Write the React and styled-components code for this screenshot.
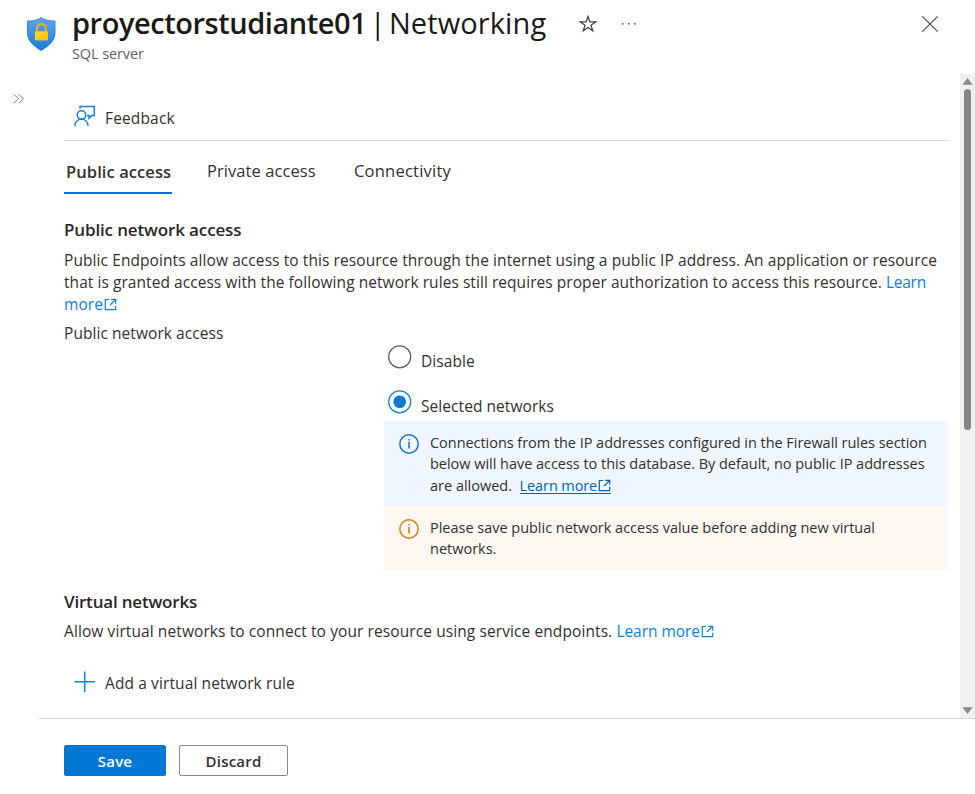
import React from 'react';
import styled, { createGlobalStyle } from 'styled-components';

const Global = createGlobalStyle`
  * { box-sizing: border-box; }
  body { margin: 0; background: #fff; font-family: "Open Sans", "Noto Sans", sans-serif; color: #323130; }
`;

const Blade = styled.div`
  width: 975px; height: 794px; display: flex; flex-direction: column; background: #fff; overflow: hidden;
`;
const Header = styled.header`
  height: 74px; flex: none; display: flex; align-items: flex-start; padding-left: 26px;
`;
const ShieldSlot = styled.div` width: 46px; padding-top: 16px; line-height: 0; `;
const Titles = styled.div` width: 503px; display: flex; flex-direction: column; `;
const Title = styled.h1`
  margin: 0; height: 44px; font-size: 29px; line-height: 46px; font-weight: 400; color: #1b1a19;
  display: flex; white-space: pre;
`;
const Run = styled.span`
  font-weight: ${p => p.$weight || 400};
  letter-spacing: ${p => p.$ls || 0}px;
  margin-right: ${p => p.$mr || 0}px;
`;
const Subtitle = styled.div`
  font-size: 14.5px; line-height: 20px; color: #605e5c; letter-spacing: -0.1px; white-space: nowrap;
`;
const HeaderIcon = styled.button`
  display: flex; border: 0; background: none; padding: 0; line-height: 0;
  margin: ${p => p.$margin};
`;
const Main = styled.div` height: 644px; flex: none; display: flex; `;
const Rail = styled.div` width: 64px; padding: 19px 0 0 13px; line-height: 0; `;
const Content = styled.main` width: 896px; display: flex; flex-direction: column; `;
const Command = styled.div`
  display: flex; align-items: center; gap: 9px; padding-left: 10px; height: ${p => p.$h}px;
  font-size: 15.5px; line-height: 22px; white-space: nowrap; margin-top: ${p => p.$mt || 0}px;
  svg { margin-bottom: ${p => p.$lift || 0}px; }
`;
const Toolbar = styled.div`
  width: 886px; height: 67px; padding-top: 21px; border-bottom: 1px solid #d9d8d7;
`;
const Tabs = styled.nav` display: flex; height: 53px; `;
const Tab = styled.a`
  height: 53px; width: ${p => p.$w}px; padding: ${p => (p.$active ? '18px 0 0 2px' : '17px 0 0 0')};
  margin-right: ${p => p.$gap || 0}px; font-size: 16.5px; line-height: 25px; white-space: nowrap;
  font-weight: ${p => (p.$active ? 600 : 400)}; letter-spacing: ${p => p.$ls || 0}px;
  border-bottom: ${p => (p.$active ? '2px solid #0f6cd6' : '0')};
`;
const Heading = styled.h2`
  margin: ${p => p.$mt}px 0 0; font-size: 17px; line-height: 26px; font-weight: 600; color: #292827;
  letter-spacing: ${p => p.$ls || 0}px; white-space: nowrap;
`;
const Line = styled.div`
  font-size: ${p => p.$size || 15.5}px; line-height: ${p => p.$lh || 22.3}px; white-space: pre;
  letter-spacing: ${p => p.$ls || 0}px; margin-top: ${p => p.$mt || 0}px;
`;
const Link = styled.a`
  color: ${p => (p.$dark ? '#0b62a8' : '#0f80d8')};
  border-bottom: ${p => (p.$dark ? '1px solid #0b62a8' : '0')};
  display: inline-block; line-height: ${p => (p.$dark ? '14px' : 'inherit')};
  letter-spacing: ${p => p.$ls || 0}px;
  svg { margin-left: 1px; vertical-align: -1px; }
`;
const Choices = styled.div` padding-left: 320px; display: flex; flex-direction: column; `;
const Radio = styled.label`
  display: flex; height: ${p => p.$h}px; padding-left: 4px; gap: 9px; font-size: 15.5px; line-height: 22px;
  letter-spacing: 0.06px; white-space: nowrap;
  span { padding-top: 5px; }
`;
const Notice = styled.div`
  width: 564px; height: ${p => p.$h}px; background: ${p => p.$bg}; display: flex; padding: ${p => p.$pt}px 0 0 14px; gap: 10px;
  > svg { flex: none; }
`;
const Scrollbar = styled.div`
  width: 15px; height: 644px; background: #f0f0f0; display: flex; flex-direction: column; align-items: center;
  justify-content: space-between; padding: 4px 0 4px;
`;
const Thumb = styled.div` width: 7px; height: 341px; border-radius: 4px; background: #858585; margin: 4px 0 auto; `;
const Footer = styled.footer`
  margin-left: 39px; height: 76px; flex: none; border-top: 1px solid #dad9d8; padding: 26px 0 0 25px;
  display: flex; gap: 13px;
`;
const Button = styled.button`
  width: ${p => p.$w}px; height: 31px; padding: 0; border-radius: 2px; font: 600 15px/22px "Open Sans", sans-serif;
  letter-spacing: 0.2px;
  background: ${p => (p.$primary ? '#0078d4' : '#fff')}; color: ${p => (p.$primary ? '#fff' : '#323130')};
  border: 1px solid ${p => (p.$primary ? '#0078d4' : '#8a8886')};
`;

const Shield = () => (
  <svg width="30" height="36" viewBox="0 0 30 36">
    <defs>
      <linearGradient id="sh" x1="0" y1="0" x2="0" y2="1"><stop offset="0" stopColor="#4f94e4" /><stop offset="1" stopColor="#0b73d4" /></linearGradient>
      <linearGradient id="si" x1="0" y1="0" x2="0" y2="1"><stop offset="0" stopColor="#62a3ec" /><stop offset="1" stopColor="#1b7cdb" /></linearGradient>
    </defs>
    <path d="M15.2 1c3 2.4 6.500 3.300 14.300 3.500V17c0 8.500-7.500 13.500-14.300 18C8.500 30.500 1 25.500 1 17V4.500C8.500 4.300 12.200 3.400 15.200 1z" fill="url(#sh)" />
    <path d="M15.200 2.400c3.200 2.100 6.500 2.900 13.100 3.200V17c0 7.600-6.600 12.400-13.100 16.500C8.800 29.400 2.200 24.600 2.200 17V5.600c6.600-.3 9.900-1.200 13-3.200z" fill="url(#si)" />
    <path d="M11 16v-3.700a4.400 4.400 0 0 1 8.800 0V16" fill="none" stroke="#f5b800" strokeWidth="2" />
    <rect x="9" y="15.300" width="12.800" height="9" rx=".7" fill="#ffd21f" />
    <path d="M21.800 16v7.600a.7.700 0 0 1-.7.700H9.700z" fill="#fdc10a" />
  </svg>
);
const Star = () => (
  <svg width="18" height="18" viewBox="0 0 18 18"><path d="M9 1.500l1.900 5.400h5.700l-4.600 3.400 1.700 5.600L9 12.500l-4.700 3.400L6 10.300 1.400 6.900h5.700z" fill="none" stroke="#484644" strokeWidth="1.300" /></svg>
);
const Dots = () => (
  <svg width="16" height="4" viewBox="0 0 16 4" fill="#605e5c"><rect x="1" y="1" width="1.600" height="1.600" /><rect x="7" y="1" width="1.600" height="1.600" /><rect x="13" y="1" width="1.600" height="1.600" /></svg>
);
const Close = () => (
  <svg width="18" height="18" viewBox="0 0 18 18"><path d="M1.300 1.300l15.400 15.400M16.700 1.300L1.300 16.700" stroke="#484644" strokeWidth="1.200" /></svg>
);
const Chevrons = () => (
  <svg width="12" height="12" viewBox="0 0 12 12"><path d="M.8 1.200l4.600 4.600L.8 10.400M5.700 1.200l4.600 4.600-4.600 4.600" fill="none" stroke="#797775" strokeWidth="1" /></svg>
);
const FeedbackIcon = () => (
  <svg width="22" height="22" viewBox="0 0 22 22" fill="none" stroke="#1481dc" strokeWidth="1.500">
    <circle cx="7.500" cy="9.900" r="4.200" />
    <path d="M.9 20.900c.2-4 3-6.700 6.600-6.700s6.400 2.700 6.600 6.700M6 3.800V1.400h14.300v9.200h-2.600l-2.700 2.700v-2.700h-1.900" />
  </svg>
);
const External = () => (
  <svg width="13" height="13" viewBox="0 0 13 13" fill="none" stroke="currentColor" strokeWidth="1.200">
    <path d="M5.200 1.500H1.300v10.200h10.400V7.800M7.200 1.300h4.500v4.400M11.700 1.300L6 7" />
  </svg>
);
const RadioMark = ({ on }) => (
  <svg width="24" height="24" viewBox="0 0 24 24">
    <circle cx="11.700" cy="11.800" r="11" fill="#fff" stroke={on ? '#1a80d8' : '#605e5c'} strokeWidth="1.300" />
    {on && <circle cx="11.700" cy="11.800" r="6.300" fill="#0078d4" />}
  </svg>
);
const Info = ({ color }) => (
  <svg width="22" height="22" viewBox="0 0 22 22">
    <circle cx="11" cy="11" r="9.200" fill="none" stroke={color} strokeWidth="1.500" />
    <path d="M11 9v6.400M11 5.900v1.700" stroke={color} strokeWidth="1.600" />
  </svg>
);
const Plus = () => (
  <svg width="22" height="22" viewBox="0 0 22 22"><path d="M10.700 .5v20.500M.5 10.700H21" stroke="#1481dc" strokeWidth="1.500" /></svg>
);
const Arrow = ({ down }) => (
  <svg width="11" height="7" viewBox="0 0 11 7"><path d={down ? 'M.5.300h10L5.500 7z' : 'M.5 6.700h10L5.500 0z'} fill="#858585" /></svg>
);

export default function App() {
  return (
    <Blade>
      <Global />
      <Header>
        <ShieldSlot><Shield /></ShieldSlot>
        <Titles>
          <Title><Run $weight={600} $ls={-0.45}>proyectorstudiante01</Run><Run $ls={-4.2} $mr={4.2}> | </Run><Run $ls={0.1}>Networking</Run></Title>
          <Subtitle>SQL server</Subtitle>
        </Titles>
        <HeaderIcon $margin="15px 0 0 4px" aria-label="Favorite"><Star /></HeaderIcon>
        <HeaderIcon $margin="22px 0 0 24px" aria-label="More"><Dots /></HeaderIcon>
        <HeaderIcon $margin="15px 0 0 284px" aria-label="Close"><Close /></HeaderIcon>
      </Header>
      <Main>
        <Rail><Chevrons /></Rail>
        <Content>
          <Toolbar><Command $h={45} $lift={3}><FeedbackIcon /><Run $ls={0.15}>Feedback</Run></Command></Toolbar>
          <Tabs>
            <Tab $active $w={108} $gap={35} $ls={0.08}>Public access</Tab>
            <Tab $w={109} $gap={38} $ls={0.07}>Private access</Tab>
            <Tab $w={98} $ls={0.22}>Connectivity</Tab>
          </Tabs>
          <Heading $mt={23} $ls={-0.14}>Public network access</Heading>
          <Line $mt={5.6} $ls={0.086}>Public Endpoints allow access to this resource through the internet using a public IP address. An application or resource</Line>
          <Line $ls={0.055}>that is granted access with the following network rules still requires proper authorization to access this resource. <Link $ls={-0.25}>Learn</Link></Line>
          <Line><Link $ls={0.1}>more<External /></Link></Line>
          <Line $mt={7} $ls={0.06}>Public network access</Line>
          <Choices>
            <Radio $h={45.4}><RadioMark /><span>Disable</span></Radio>
            <Radio $h={31}><RadioMark on /><span>Selected networks</span></Radio>
            <Notice $h={85} $bg="#eff6ff" $pt={12}>
              <Info color="#1a6fe0" />
              <div>
                <Line $size={14.5} $lh={20.5} $ls={-0.04}>Connections from the IP addresses configured in the Firewall rules section</Line>
                <Line $size={14.5} $lh={20.5} $ls={-0.03}>below will have access to this database. By default, no public IP addresses</Line>
                <Line $size={14.5} $lh={22} $mt={1}>are allowed.  <Link $dark $ls={-0.1}>Learn more<External /></Link></Line>
              </div>
            </Notice>
            <Notice $h={64} $bg="#fff7f1" $pt={12}>
              <Info color="#e07b12" />
              <div>
                <Line $size={14.5} $lh={20.6} $ls={-0.02}>Please save public network access value before adding new virtual</Line>
                <Line $size={14.5} $lh={20.6}>networks.</Line>
              </div>
            </Notice>
          </Choices>
          <Heading $mt={19} $ls={-0.19}>Virtual networks</Heading>
          <Line $mt={5} $ls={0.093}>Allow virtual networks to connect to your resource using service endpoints. <Link $ls={-0.04}>Learn more<External /></Link></Line>
          <Command $h={66} $mt={8} $lift={2}><Plus /><Run $ls={0.11}>Add a virtual network rule</Run></Command>
        </Content>
        <Scrollbar><Arrow /><Thumb /><Arrow down /></Scrollbar>
      </Main>
      <Footer>
        <Button $primary $w={102}>Save</Button>
        <Button $w={109}>Discard</Button>
      </Footer>
    </Blade>
  );
}
